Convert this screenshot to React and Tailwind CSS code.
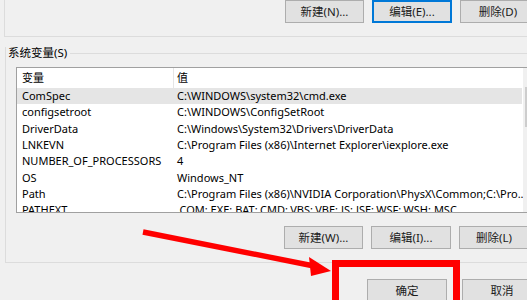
import React from 'react'

const rows = [
  ['ComSpec', 'C:\\WINDOWS\\system32\\cmd.exe'],
  ['configsetroot', 'C:\\WINDOWS\\ConfigSetRoot'],
  ['DriverData', 'C:\\Windows\\System32\\Drivers\\DriverData'],
  ['LNKEVN', 'C:\\Program Files (x86)\\Internet Explorer\\iexplore.exe'],
  ['NUMBER_OF_PROCESSORS', '4'],
  ['OS', 'Windows_NT'],
  ['Path', 'C:\\Program Files (x86)\\NVIDIA Corporation\\PhysX\\Common;C:\\Pro...'],
  ['PATHEXT', '.COM;.EXE;.BAT;.CMD;.VBS;.VBE;.JS;.JSE;.WSF;.WSH;.MSC'],
]

function Btn({ children, focused, className = '' }) {
  return (
    <div
      className={`h-[23px] flex items-center justify-center bg-[#e1e1e1] border text-[11.5px] text-[#1a1a1a] ${
        focused ? 'border-[#0078d7] border-2' : 'border-[#adadad]'
      } ${className}`}
    >
      {children}
    </div>
  )
}

export default function App() {
  return (
    <div
      className="relative w-[527px] h-[300px] overflow-hidden bg-[#f0f0f0] text-black"
      style={{ fontFamily: '"Noto Sans", "Noto Sans CJK SC", sans-serif' }}
    >
      <div className="w-[600px]">
        {/* user variables group (bottom part) */}
        <div className="ml-[4px] h-[37px] border-l border-b border-[#dcdcdc] flex gap-2 pl-[280px]">
          <Btn className="w-[79px]">新建(N)...</Btn>
          <Btn focused className="w-[80px]">编辑(E)...</Btn>
          <Btn className="w-[76px]">删除(D)</Btn>
        </div>

        {/* system variables group */}
        <div className="mt-[10px] ml-[5px] h-[216px] border-l border-b border-[#dcdcdc] flex flex-col">
          <div className="flex items-center h-[12px] shrink-0">
            <span className="ml-[2px] pr-[3px] text-[11.5px] leading-[12px]">系统变量(S)</span>
            <div className="flex-1 border-t border-[#dcdcdc]" />
          </div>

          <div className="mt-[8px] ml-[10px] w-[560px] h-[146px] shrink-0 border border-[#a0a0a0] bg-white flex overflow-hidden">
            <div className="w-[505px] shrink-0 flex flex-col">
              <div className="h-[20px] flex items-center text-[11px] shrink-0">
                <div className="w-[157px] shrink-0 pl-[5px] border-r border-[#e5e5e5] h-full flex items-center">变量</div>
                <div className="pl-[3px]">值</div>
              </div>
              {rows.map(([k, v], i) => (
                <div
                  key={k}
                  className={`h-[16.3px] shrink-0 flex items-center text-[11px] leading-[16px] whitespace-nowrap ${
                    i === 0 ? 'bg-[#e5e5e5]' : ''
                  }`}
                >
                  <div className="w-[157px] shrink-0 pl-[5px]">{k}</div>
                  <div className="pl-[3px]">{v}</div>
                </div>
              ))}
            </div>
            <div className="w-[17px] ml-[1px] shrink-0 bg-[#f0f0f0] flex flex-col pt-[19px]">
              <div className="mx-[2px] h-[40px] bg-[#cdcdcd]" />
            </div>
          </div>

          <div className="mt-[13px] flex gap-2 pl-[278px] shrink-0">
            <Btn className="w-[79px]">新建(W)...</Btn>
            <Btn className="w-[80px]">编辑(I)...</Btn>
            <Btn className="w-[70px]">删除(L)</Btn>
          </div>
        </div>

        {/* dialog buttons */}
        <div className="mt-[16px] flex gap-[15px] pl-[367px]">
          <Btn className="w-[80px]">确定</Btn>
          <Btn className="w-[80px]">取消</Btn>
        </div>
      </div>

      {/* red annotation */}
      <svg className="absolute left-0 top-0 pointer-events-none" width="527" height="300">
        <line x1="143" y1="232" x2="314" y2="266" stroke="#ff0000" strokeWidth="5.5" />
        <polygon points="331,271 309,257 311,276" fill="#ff0000" />
        <rect x="335.5" y="263.5" width="121" height="45" fill="none" stroke="#ff0000" strokeWidth="7" />
      </svg>
    </div>
  )
}
